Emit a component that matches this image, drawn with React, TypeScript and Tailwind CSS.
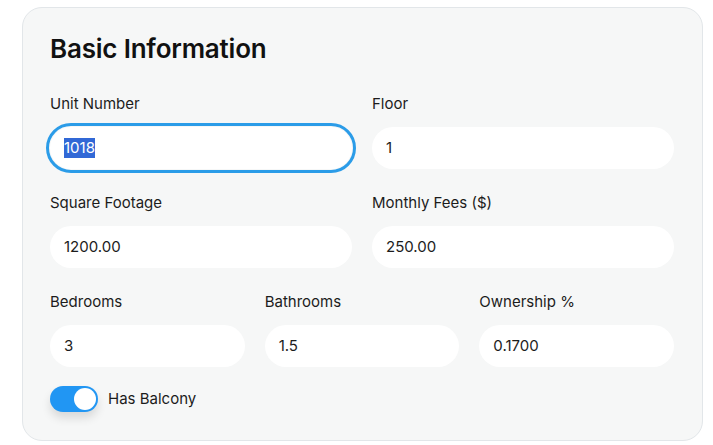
import React from 'react';

const font = { fontFamily: 'Inter, "Noto Sans", sans-serif' };

interface FieldProps {
    label: string;
    value: string;
    focused?: boolean;
}

const Field: React.FC<FieldProps> = ({ label, value, focused }) => (
    <div className="flex flex-col">
        <label className="text-[15px] leading-5 text-[#1c1c1c] mb-[13px]">{label}</label>
        <div
            className={`h-[42px] rounded-full bg-white flex items-center pl-[14px] text-[15px] text-[#1c1c1c] ${
                focused ? 'outline-[3px] outline-solid outline-[#2b9ce8] outline-offset-[1px]' : ''
            }`}
        >
            {focused ? <span className="bg-[#3168d6] text-white leading-[20px]">{value}</span> : value}
        </div>
    </div>
);

export default function App() {
    return (
        <div className="w-[713px] h-[445px] bg-white pt-[7px] pl-[22px]" style={font}>
            <div className="w-[681px] h-[434px] rounded-[20px] border border-[#e2e6e9] bg-[#f6f7f7] pl-[27px] pr-[28px] pt-[25px]">
                <h2 className="text-[26px] leading-8 font-semibold text-[#111] tracking-[-0.2px] mb-[29px]">
                    Basic Information
                </h2>

                <div className="grid grid-cols-2 gap-x-5 gap-y-[24px]">
                    <Field label="Unit Number" value="1018" focused />
                    <Field label="Floor" value="1" />
                    <Field label="Square Footage" value="1200.00" />
                    <Field label="Monthly Fees ($)" value="250.00" />
                </div>

                <div className="grid grid-cols-3 gap-x-5 mt-[24px]">
                    <Field label="Bedrooms" value="3" />
                    <Field label="Bathrooms" value="1.5" />
                    <Field label="Ownership %" value="0.1700" />
                </div>

                <div className="flex items-center gap-[10px] mt-[19px]">
                    <div className="w-[48px] h-[26px] rounded-full bg-[#2196f3] flex items-center justify-end pr-[2px] shadow-[0_6px_10px_rgba(0,0,0,0.12)]">
                        <div className="w-[22px] h-[22px] rounded-full bg-white" />
                    </div>
                    <span className="text-[15px] text-[#1c1c1c]">Has Balcony</span>
                </div>
            </div>
        </div>
    );
}
